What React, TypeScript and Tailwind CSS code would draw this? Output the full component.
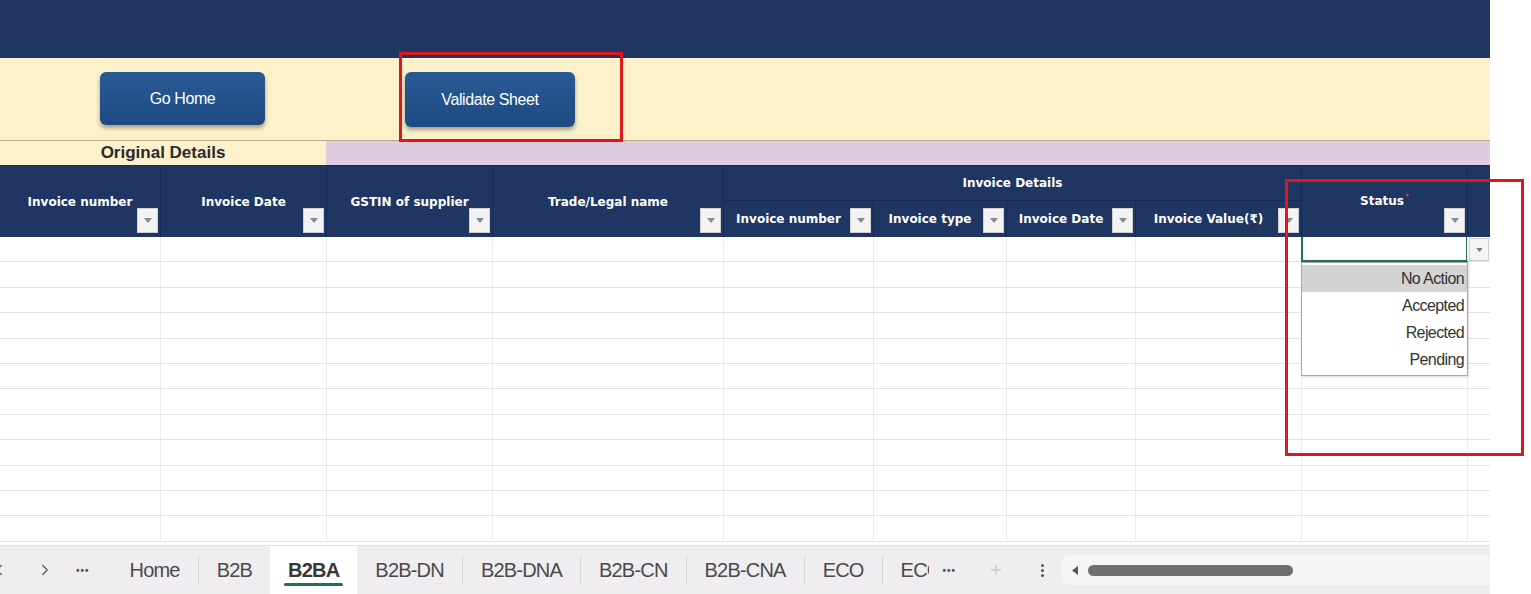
import { ChevronLeft, ChevronRight, Plus } from 'lucide-react';

const COLS = 'grid-cols-[160px_166px_166px_231px_150px_133px_129px_166px_166px_23px]';
const ROWS = 12;
const TABS = ['Home', 'B2B', 'B2BA', 'B2B-DN', 'B2B-DNA', 'B2B-CN', 'B2B-CNA', 'ECO', 'ECC'];

// 필터 버튼 (엑셀 자동필터)
function FilterButton() {
  return (
    <span className="absolute right-[2px] bottom-[4px] w-[21px] h-[25px] bg-[#f3f3f3] border border-[#d0d0d0] flex items-center justify-center">
      <svg width="8" height="5" viewBox="0 0 8 5">
        <path d="M0 0h8L4 5z" fill="#8a8a8a" />
      </svg>
    </span>
  );
}

function HeaderCell({
  label,
  className = '',
  filter = true,
  children,
}: {
  label?: string;
  className?: string;
  filter?: boolean;
  children?: React.ReactNode;
}) {
  return (
    <div className={`relative flex items-center justify-center border-l border-[#142a52] ${className}`}>
      {label && <span className="text-white font-bold text-[12px] leading-none whitespace-nowrap">{label}</span>}
      {children}
      {filter && <FilterButton />}
    </div>
  );
}

function StatusDropdown() {
  const options = ['No Action', 'Accepted', 'Rejected', 'Pending'];
  return (
    <div className="absolute left-[-1px] top-[25px] w-[167px] bg-white border border-[#a6a6a6] shadow-[1px_1px_2px_rgba(0,0,0,0.15)] py-[2px] z-10">
      {options.map((o, i) => (
        <div
          key={o}
          className={`h-[27px] flex items-center justify-end pr-[3px] text-[16px] text-[#333] tracking-[-0.6px] ${
            i === 0 ? 'bg-[#d4d4d4]' : ''
          }`}
        >
          {o}
        </div>
      ))}
    </div>
  );
}

export default function App() {
  return (
    <div
      className="relative w-[1531px] h-[594px] bg-white overflow-hidden flex"
      style={{ fontFamily: '"Liberation Sans", Arial, sans-serif' }}
    >
      <div className="w-[1490px] flex flex-col">
        {/* 상단 바 */}
        <div className="h-[58px] bg-[#1f3562]" />

        {/* 버튼 영역 */}
        <div className="h-[82px] bg-[#fdf1cb] flex items-start pt-[14px] pl-[100px] gap-[140px]">
          <button className="w-[165px] h-[53px] rounded-[6px] bg-gradient-to-b from-[#2a5a95] to-[#1d4a82] text-white text-[16px] tracking-[-0.4px] shadow-[0_3px_4px_rgba(0,0,0,0.35)]">
            Go Home
          </button>
          <button className="w-[170px] h-[55px] rounded-[6px] bg-gradient-to-b from-[#2a5a95] to-[#1d4a82] text-white text-[16px] tracking-[-0.4px] shadow-[0_3px_4px_rgba(0,0,0,0.35)]">
            Validate Sheet
          </button>
        </div>

        {/* 그룹 제목 */}
        <div className="h-[25px] flex border-t border-[#b9ad8a]">
          <div className="w-[326px] bg-[#fdf1cb] flex items-center justify-center text-[17px] font-bold text-[#2a2a2a]">
            Original Details
          </div>
          <div className="flex-1 bg-[#decbe0]" />
        </div>

        {/* 헤더 */}
        <div
          className={`grid ${COLS} grid-rows-[35px_36px] bg-[#1f3562] border-t border-[#142a52]`}
          style={{ fontFamily: '"DejaVu Sans", Verdana, sans-serif' }}
        >
          <HeaderCell label="Invoice number" className="row-span-2 border-l-0" />
          <HeaderCell label="Invoice Date" className="row-span-2" />
          <HeaderCell label="GSTIN of supplier" className="row-span-2" />
          <HeaderCell label="Trade/Legal name" className="row-span-2" />
          <HeaderCell label="Invoice Details" className="col-span-4 border-b" filter={false} />
          <HeaderCell label="Status" className="row-span-2 pb-[2px]">
            <span className="text-[#e04040] text-[8px] self-start mt-[26px] ml-[1px]">*</span>
          </HeaderCell>
          <HeaderCell className="row-span-2" filter={false} />
          <HeaderCell label="Invoice number" className="row-start-2 col-start-5 pr-[20px]" />
          <HeaderCell label="Invoice type" className="row-start-2 col-start-6 pr-[20px]" />
          <HeaderCell label="Invoice Date" className="row-start-2 col-start-7 pr-[20px]" />
          <HeaderCell label="Invoice Value(₹)" className="row-start-2 col-start-8 pr-[20px]" />
        </div>

        {/* 데이터 행 */}
        <div className="flex-1 overflow-hidden">
          {Array.from({ length: ROWS }).map((_, r) => (
            <div key={r} className={`grid ${COLS} h-[25.4px] border-b border-[#e2e2e2]`}>
              {Array.from({ length: 10 }).map((_, c) => (
                <div key={c} className={`relative ${c > 0 ? 'border-l border-[#ececec]' : ''}`}>
                  {r === 0 && c === 8 && (
                    <>
                      <div className="absolute inset-[-1px] border-2 border-[#217346] border-t-0" />
                      <StatusDropdown />
                    </>
                  )}
                  {r === 0 && c === 9 && (
                    <div className="absolute left-[1px] top-[1px] w-[20px] h-[23px] bg-[#f4f4f4] border border-[#cfcfcf] flex items-center justify-center">
                      <svg width="7" height="4" viewBox="0 0 8 5">
                        <path d="M0 0h8L4 5z" fill="#777" />
                      </svg>
                    </div>
                  )}
                </div>
              ))}
            </div>
          ))}
        </div>

        {/* 시트 탭 */}
        <div className="h-[49px] shrink-0 bg-[#efedf0] border-t border-[#e3dfe3] flex items-center text-[#4a4a4a]">
          <ChevronLeft className="w-[18px] h-[18px] ml-[-10px] text-[#555]" strokeWidth={1.6} />
          <ChevronRight className="w-[18px] h-[18px] ml-[28px] text-[#555]" strokeWidth={1.6} />
          <span className="ml-[22px] text-[10px] font-bold tracking-[1px] text-[#555]">•••</span>
          <div className="flex items-stretch h-full ml-[22px]">
            {TABS.map((t, i) => {
              const active = t === 'B2BA';
              return (
                <div key={t} className="flex items-stretch">
                  {i > 0 && !active && TABS[i - 1] !== 'B2BA' && (
                    <span className="w-px my-[10px] bg-[#d9d6da]" />
                  )}
                  <div
                    className={`relative flex items-center px-[18px] text-[20px] tracking-[-0.8px] ${
                      active ? 'bg-white font-bold text-[#383838]' : ''
                    } ${t === 'ECC' ? 'w-[46px] overflow-hidden pr-0' : ''}`}
                  >
                    {t}
                    {active && (
                      <span className="absolute left-[14px] right-[14px] bottom-[8px] h-[3px] rounded-full bg-[#217346]" />
                    )}
                  </div>
                </div>
              );
            })}
          </div>
          <span className="ml-[14px] text-[10px] font-bold tracking-[1px] text-[#555]">•••</span>
          <Plus className="w-[16px] h-[16px] ml-[32px] text-[#bdbdbd]" strokeWidth={1.5} />
          <span className="ml-[37px] flex flex-col gap-[2px]">
            <span className="w-[3px] h-[3px] rounded-full bg-[#555]" />
            <span className="w-[3px] h-[3px] rounded-full bg-[#555]" />
            <span className="w-[3px] h-[3px] rounded-full bg-[#555]" />
          </span>
          <div className="ml-[18px] flex-1 h-[30px] bg-[#f7f4f6] rounded-l-[6px] flex items-center pl-[10px]">
            <svg width="6" height="9" viewBox="0 0 6 9">
              <path d="M6 0v9L0 4.5z" fill="#555" />
            </svg>
            <div className="ml-[10px] w-[205px] h-[11px] rounded-full bg-[#6f6f6f]" />
          </div>
        </div>
      </div>
      <div className="flex-1 bg-white" />

      {/* 강조 표시 */}
      <div className="absolute left-[399px] top-[52px] w-[224px] h-[90px] border-[3px] border-[#e0161f] pointer-events-none" />
      <div className="absolute left-[1285px] top-[179px] w-[239px] h-[277px] border-[3px] border-[#e0161f] pointer-events-none" />
    </div>
  );
}
